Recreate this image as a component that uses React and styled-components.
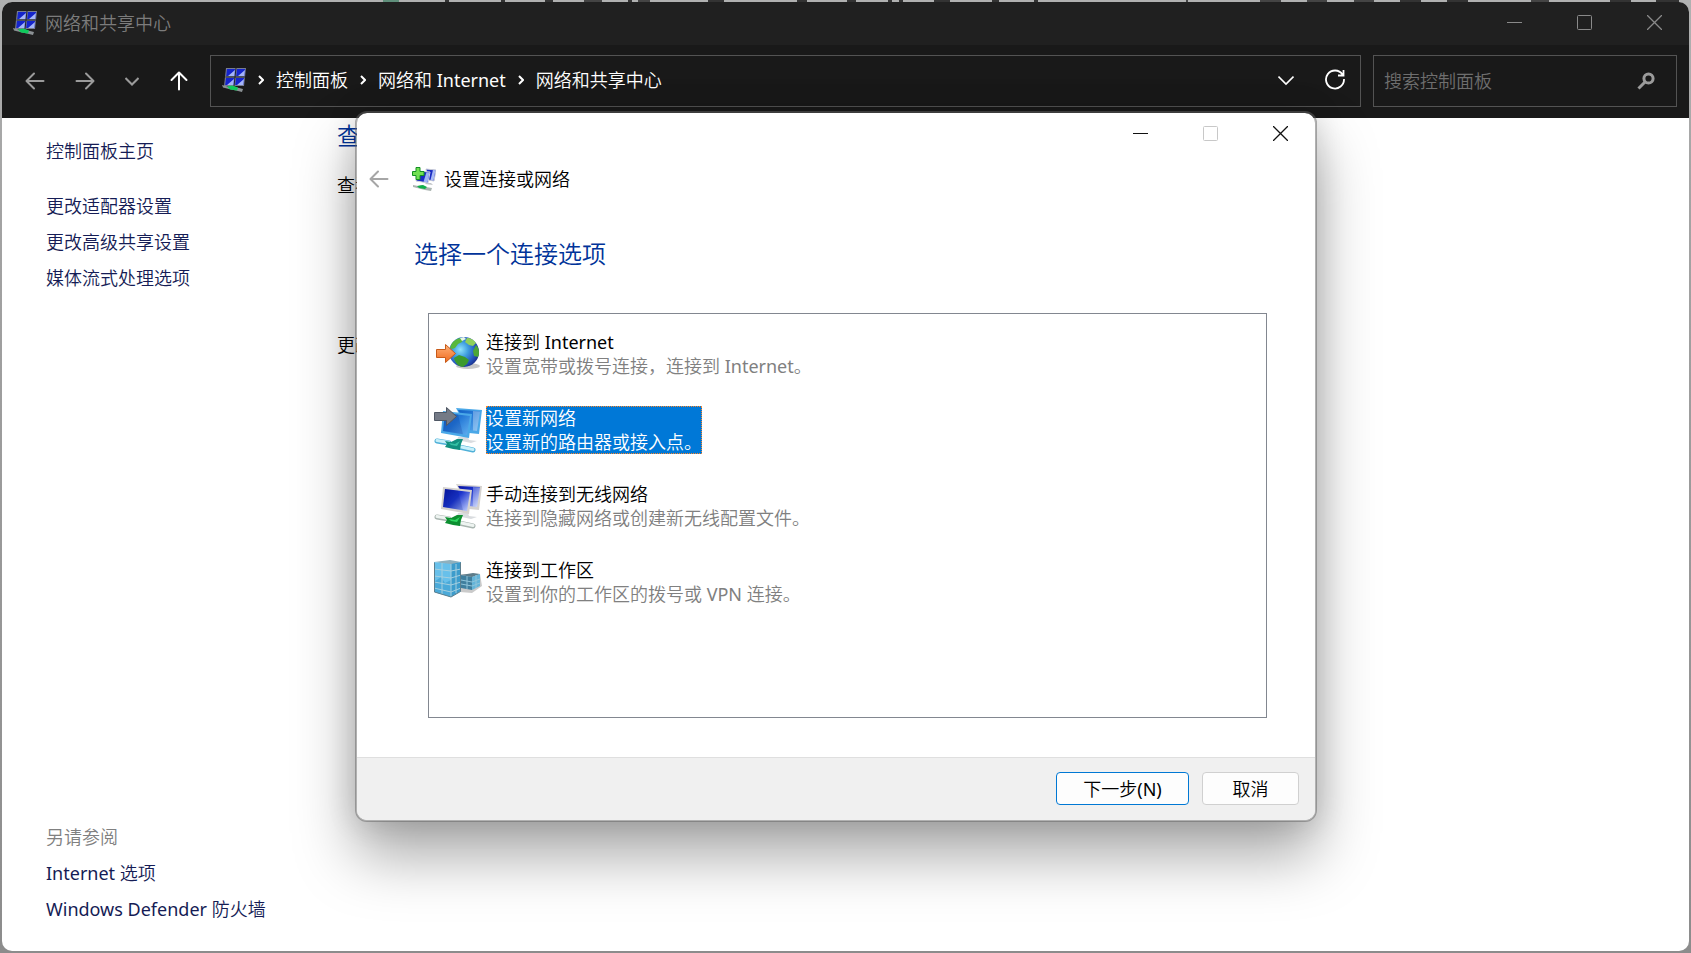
import { useState } from "react";
import styled, { createGlobalStyle, css } from "styled-components";

const OPTIONS = [
  {
    id: "internet",
    icon: "globe",
    title: "连接到 Internet",
    description: "设置宽带或拨号连接，连接到 Internet。",
  },
  {
    id: "router",
    icon: "router",
    title: "设置新网络",
    description: "设置新的路由器或接入点。",
  },
  {
    id: "wireless",
    icon: "wireless",
    title: "手动连接到无线网络",
    description: "连接到隐藏网络或创建新无线配置文件。",
  },
  {
    id: "workplace",
    icon: "workplace",
    title: "连接到工作区",
    description: "设置到你的工作区的拨号或 VPN 连接。",
  },
];

const CRUMBS = ["控制面板", "网络和 Internet", "网络和共享中心"];

// slivers of the window behind: [x, width, color]
const BACKDROP_MARKS = [
  [383, 16, "#5f8f7b"],
  [445, 4, "#333"],
  [501, 4, "#333"],
  [545, 8, "#333"],
  [584, 18, "#444"],
  [628, 4, "#333"],
  [638, 12, "#444"],
  [708, 16, "#333"],
  [797, 10, "#333"],
  [847, 9, "#333"],
  [888, 4, "#333"],
  [899, 4, "#333"],
  [934, 16, "#333"],
  [992, 7, "#333"],
  [1034, 4, "#333"],
  [1186, 2, "#444"],
  [1260, 21, "#444"],
  [1307, 20, "#444"],
  [1354, 20, "#444"],
  [1400, 21, "#333"],
  [1447, 21, "#333"],
  [1531, 18, "#444"],
  [1610, 21, "#333"],
  [1656, 23, "#333"],
];

const NetworkIcon = () => (
  <svg width="24" height="24" viewBox="0 0 24 24" aria-hidden="true">
    <path d="M4 0h20l-2 18H2z" fill="#777d92" />
    <path d="M13.500 0h1l-2 18h-1zM3.500 8.500h19.500v1H3.500z" fill="#20242c" />
    <path d="M5 1h8l-.8 7H4.200z" fill="#1424cc" />
    <path d="M15 1h8l-.8 7h-8z" fill="#1424cc" />
    <path d="M4 10h8l-.8 7H3.200z" fill="#1424cc" />
    <path d="M14 10h8l-.8 7h-8z" fill="#1424cc" />
    <path
      d="M13 2l-.8 6H6zM23 2l-.8 6H16zM12 11l-.8 6H5zM22 11l-.8 6H15z"
      fill="#a5b5f8"
    />
    <path d="M0 17l6 1.500 4-1 5 2 6 1.500-1 3-6-1.500-5-1-8-2z" fill="#8b9194" />
    <path d="M5 18.500l5-1 6 2-1 3-7-1z" fill="#0fca5c" />
  </svg>
);

const AddNetworkIcon = () => (
  <svg width="24" height="24" viewBox="0 0 24 24" aria-hidden="true">
    <path d="M14 2l10 1-2 11-6-1z" fill="#1a2cc4" stroke="#c9ccd6" />
    <path d="M21 3l2.500.3-2 10.200-3-.5z" fill="#a9baf6" />
    <path d="M5 4l13 1-2 11-12-2z" fill="#1a2cc4" stroke="#d4d7de" />
    <path d="M14.500 5.200l3 .3-2 10-4-.8z" fill="#9fb2f4" />
    <path d="M14 16h5l2 2-8-1z" fill="#c2c5c9" />
    <path d="M1 18l5 1 4-1 4 2 6 1-1 3-6-1-4-1-8-2z" fill="#aab4b0" />
    <path d="M5 19l6-1 4 2-2 2-6-1z" fill="#10b04a" />
    <path d="M4 .5h4v4h4v4H8v4H4v-4H.5v-4H4z" fill="#72e052" stroke="#139022" />
  </svg>
);

const GlobeIcon = () => (
  <svg width="48" height="48" viewBox="0 0 48 48" aria-hidden="true">
    <defs>
      <radialGradient id="sea" cx="0.38" cy="0.42" r="0.65">
        <stop offset="0" stopColor="#8fe3fb" />
        <stop offset="0.4" stopColor="#3f9ee0" />
        <stop offset="0.8" stopColor="#2450b8" />
        <stop offset="1" stopColor="#1a2f8a" />
      </radialGradient>
      <linearGradient id="orange" x1="0" y1="0" x2="0" y2="1">
        <stop offset="0" stopColor="#ffb27a" />
        <stop offset="1" stopColor="#f06a1c" />
      </linearGradient>
    </defs>
    <ellipse cx="34" cy="36" rx="12" ry="3" fill="#000" opacity="0.22" />
    <circle cx="30" cy="22" r="15" fill="url(#sea)" />
    <path d="M17 15c2-4 5-6 9-7l3 1-1 3-4 2-3 4-3 1-2-1z" fill="#58b83c" />
    <path d="M33 8c4 0 7 2 9 5l-3 3-4-1-4-3z" fill="#8fd05a" />
    <path d="M42 15c3 3 4 8 2 12l-4-1-1-5z" fill="#4ca636" />
    <path d="M20 28l5-3 6 2 4 3-2 4-4 3c-4 0-8-4-9-9z" fill="#3c9a2e" />
    <path d="M26 8l4-1 2 2-4 2z" fill="#e8f6e4" />
    <path
      d="M2.500 19.500h9v-5l10 9-10 9v-5h-9z"
      fill="url(#orange)"
      stroke="#c75a18"
      strokeLinejoin="round"
    />
  </svg>
);

const MonitorsIcon = ({ id, from, mid, to, frame, cable, plug, arrow }) => (
  <svg width="48" height="48" viewBox="0 0 48 48" aria-hidden="true">
    <defs>
      <linearGradient id={id} x1="0" y1="0" x2="1" y2="0.8">
        <stop offset="0" stopColor={from} />
        <stop offset="0.5" stopColor={mid} />
        <stop offset="1" stopColor={to} />
      </linearGradient>
    </defs>
    <path d="M22 2l26 2-3 24-10-1z" fill={frame} />
    <path d="M24 4l22 1-3 20-8-1z" fill={`url(#${id})`} />
    <path d="M39 5l7 .5-3 19.500-4-.5z" fill="#fff" opacity="0.3" />
    <path d="M24 31h10l1 3 8 1-6 2-14-3z" fill="#d9dcdf" />
    <path d="M9 5l29 3-3 24-28-5z" fill={frame} />
    <path d="M11 7l25 3-3 19-24-4z" fill={`url(#${id})`} />
    <path d="M11 7l13 1.500 5 19.800L9 25z" fill="#001a80" opacity="0.18" />
    <path
      d="M3 35l12 2M25 41l14 3"
      stroke={cable[0]}
      strokeWidth="5"
      strokeLinecap="round"
    />
    <path
      d="M3 34.500l12 2M25 40.500l14 3"
      stroke={cable[1]}
      strokeWidth="3"
      strokeLinecap="round"
    />
    <path d="M11 35l6 1 6-3h6l-2 5-1 6-7-1-8-2 2-3z" fill={plug[0]} />
    <path d="M15 37l6 1 5-3-3 5-6-1z" fill={plug[1]} />
    {arrow && (
      <path
        d="M.5 6.500h12v-5l10 9-10 9v-5H.5z"
        fill="#747a86"
        stroke="#4f5764"
        strokeLinejoin="round"
      />
    )}
  </svg>
);

const BuildingsIcon = () => (
  <svg width="48" height="48" viewBox="0 -2 48 48" aria-hidden="true">
    <path d="M26 32l12 1 10-7-2-12-19 0z" fill="#666" opacity="0.35" />
    <path d="M27 15l12-2 7 1-8 3z" fill="#5d7c8a" />
    <path d="M27 15l11 2v13l-11-2z" fill="#3f7f9e" />
    <path d="M38 17l8-3v12l-8 4z" fill="#64b4d8" />
    <path d="M27 20l11 2 8-3M27 24l11 2 8-3M33 16v13M42 15v13" stroke="#8fc4da" fill="none" />
    <path d="M0 2l16-2 11 2-10 3z" fill="#8fb0bd" />
    <path d="M0 2l17 2v33L0 32z" fill="#68c0ea" />
    <path d="M17 4l10-2v29l-10 6z" fill="#3d9ccc" />
    <path d="M0 22l7-5 4 6 6-3v17L0 32z" fill="#2e93c8" opacity="0.5" />
    <path
      d="M0 9l17 2 10-2M0 16l17 2 10-3M0 22l17 3 10-3M0 28l17 4 10-4M8 3v31M17 4v33M22 4v29"
      stroke="#a5cfdf"
      fill="none"
    />
    <path d="M.5 2.500v29.500l16.500 5 9.500-5.500V2.500" stroke="#5c7f8e" fill="none" />
  </svg>
);

const OptionIcon = ({ name }) => {
  if (name === "globe") return <GlobeIcon />;
  if (name === "workplace") return <BuildingsIcon />;
  if (name === "router") {
    return (
      <MonitorsIcon
        id="routerScreen"
        from="#1260c4"
        mid="#2478d6"
        to="#5aa8ec"
        frame="#4aa8e8"
        cable={["#4fb0d8", "#c9f0fa"]}
        plug={["#12907f", "#35c0a4"]}
        arrow
      />
    );
  }
  return (
    <MonitorsIcon
      id="wirelessScreen"
      from="#0712a0"
      mid="#1c34cc"
      to="#b0c0fa"
      frame="#d5d2cf"
      cable={["#a9b5b0", "#eef4f1"]}
      plug={["#0c8f30", "#2fd860"]}
    />
  );
};

const ArrowIcon = ({ dir = "left" }) => {
  const turn = { left: 0, up: 90, right: 180 }[dir];
  return (
    <svg width="20" height="20" viewBox="0 0 20 20" aria-hidden="true">
      <path
        d="M18.500 10H2M9 2.500L1.500 10 9 17.500"
        transform={`rotate(${turn} 10 10)`}
        fill="none"
        stroke="currentColor"
        strokeWidth="2"
        strokeLinecap="round"
        strokeLinejoin="round"
      />
    </svg>
  );
};

const ChevronIcon = ({ size = 16, stroke = 1.6 }) => (
  <svg width={size} height={size} viewBox="0 0 16 16" aria-hidden="true">
    <path d="M.5 4.500l7.500 7.500 7.500-7.500" fill="none" stroke="currentColor" strokeWidth={stroke} />
  </svg>
);

const CrumbChevron = () => (
  <svg width="6" height="10" viewBox="0 0 6 10" aria-hidden="true">
    <path d="M1 1l4 4-4 4" fill="none" stroke="#fff" strokeWidth="2" />
  </svg>
);

const RefreshIcon = () => (
  <svg width="22" height="22" viewBox="0 0 22 22" aria-hidden="true">
    <path
      d="M18.500 5.500A9 9 0 1 0 20 10M19.500 1v5.500H14"
      fill="none"
      stroke="currentColor"
      strokeWidth="1.800"
    />
  </svg>
);

const SearchIcon = () => (
  <svg width="18" height="18" viewBox="0 0 18 18" aria-hidden="true">
    <circle cx="11.500" cy="6.500" r="4.600" fill="none" stroke="#9b9b9b" strokeWidth="3" />
    <path d="M8 10L1.500 16.500" stroke="#9b9b9b" strokeWidth="3" />
  </svg>
);

const WindowButtons = ({ dark }) => (
  <Controls>
    <ControlButton $color={dark ? "#8a8a8a" : "#111"} aria-label="最小化">
      <svg width="15" height="15" viewBox="0 0 15 15">
        <path d="M0 7.500h15" stroke="currentColor" />
      </svg>
    </ControlButton>
    <ControlButton $color={dark ? "#8a8a8a" : "#c8c8c8"} aria-label="最大化">
      <svg width="15" height="15" viewBox="0 0 15 15">
        <rect x=".5" y=".5" width="14" height="14" rx="1" fill="none" stroke="currentColor" />
      </svg>
    </ControlButton>
    <ControlButton $color={dark ? "#8a8a8a" : "#111"} aria-label="关闭">
      <svg width="15" height="15" viewBox="0 0 15 15">
        <path d="M0 0l15 15M15 0L0 15" stroke="currentColor" strokeWidth="1.300" />
      </svg>
    </ControlButton>
  </Controls>
);

const App = () => {
  const [selected, setSelected] = useState("router");
  const [query, setQuery] = useState("");

  return (
    <Desktop>
      <GlobalStyle />
      <Backdrop width="100%" height="2" aria-hidden="true">
        {BACKDROP_MARKS.map(([x, width, color]) => (
          <rect key={x} x={x} width={width} height="2" fill={color} />
        ))}
      </Backdrop>

      <Window>
        <TitleBar>
          <NetworkIcon />
          <WindowTitle>网络和共享中心</WindowTitle>
          <WindowButtons dark />
        </TitleBar>

        <Toolbar>
          <NavButtons>
            <NavButton aria-label="后退">
              <ArrowIcon />
            </NavButton>
            <NavButton aria-label="前进">
              <ArrowIcon dir="right" />
            </NavButton>
            <NavButton aria-label="最近的位置">
              <ChevronIcon size={14} stroke={2.4} />
            </NavButton>
            <NavButton aria-label="上移" $active>
              <ArrowIcon dir="up" />
            </NavButton>
          </NavButtons>
          <AddressBar>
            <NetworkIcon />
            {CRUMBS.map(crumb => (
              <Crumb key={crumb}>
                <CrumbChevron />
                <CrumbLink href="#">{crumb}</CrumbLink>
              </Crumb>
            ))}
            <AddressActions>
              <IconButton aria-label="展开">
                <ChevronIcon />
              </IconButton>
              <IconButton aria-label="刷新">
                <RefreshIcon />
              </IconButton>
            </AddressActions>
          </AddressBar>
          <SearchBox>
            <SearchInput
              aria-label="搜索控制面板"
              placeholder="搜索控制面板"
              value={query}
              onChange={e => setQuery(e.target.value)}
            />
            <SearchIcon />
          </SearchBox>
        </Toolbar>

        <Body>
          <Sidebar>
            <SideLink href="#">控制面板主页</SideLink>
            <SideGroup>
              <SideLink href="#">更改适配器设置</SideLink>
              <SideLink href="#">更改高级共享设置</SideLink>
              <SideLink href="#">媒体流式处理选项</SideLink>
            </SideGroup>
            <SeeAlso>
              <SeeAlsoTitle>另请参阅</SeeAlsoTitle>
              <SideLink href="#">Internet 选项</SideLink>
              <SideLink href="#">Windows Defender 防火墙</SideLink>
            </SeeAlso>
          </Sidebar>
          <Content>
            <ContentTitle>查看</ContentTitle>
            <ContentText>查看</ContentText>
            <ContentText $last>更改</ContentText>
          </Content>
        </Body>
      </Window>

      <Dialog role="dialog" aria-labelledby="wizard-title">
        <WindowButtons />
        <WizardHeader>
          <BackButton aria-label="返回">
            <ArrowIcon />
          </BackButton>
          <AddNetworkIcon />
          <WizardTitle id="wizard-title">设置连接或网络</WizardTitle>
        </WizardHeader>
        <WizardBody>
          <Heading>选择一个连接选项</Heading>
          <OptionList>
            {OPTIONS.map(option => (
              <Option key={option.id} onClick={() => setSelected(option.id)}>
                <OptionIcon name={option.icon} />
                <OptionText $selected={option.id === selected}>
                  <OptionTitle>{option.title}</OptionTitle>
                  <OptionDescription>{option.description}</OptionDescription>
                </OptionText>
              </Option>
            ))}
          </OptionList>
        </WizardBody>
        <Footer>
          <ActionButton $primary>下一步(N)</ActionButton>
          <ActionButton>取消</ActionButton>
        </Footer>
      </Dialog>
    </Desktop>
  );
};

const GlobalStyle = createGlobalStyle`
  * {
    box-sizing: border-box;
  }

  body {
    margin: 0;
    font-family: "Noto Sans", "Noto Sans CJK SC DemiLight", "Noto Sans CJK SC", sans-serif;
    font-size: 18px;
    font-weight: 400;
    line-height: 24px;
    color: #000;
  }

  button,
  input {
    font: inherit;
  }

  button {
    padding: 0;
    border: none;
    background: none;
  }

  a {
    text-decoration: none;
  }

  svg {
    display: block;
    flex-shrink: 0;
  }
`;

const Desktop = styled.div`
  position: relative;
  height: 100vh;
  padding: 2px;
  overflow: hidden;
  background: linear-gradient(#b0b1b1, #a4a4a4 20%, #8c8c8c);
`;

const Backdrop = styled.svg`
  position: absolute;
  top: 0;
  left: 0;
`;

const Window = styled.div`
  position: relative;
  display: flex;
  flex-direction: column;
  height: 100%;
  overflow: hidden;
  background: #fff;
  border-radius: 10px;
`;

const TitleBar = styled.header`
  display: flex;
  align-items: center;
  gap: 8px;
  height: 43px;
  padding: 0 0 2px 11px;
  background: #202020;
`;

const WindowTitle = styled.span`
  flex: 1;
  color: #7c7c7c;
`;

const Controls = styled.div`
  display: flex;
  align-self: flex-start;
  justify-content: flex-end;
`;

const ControlButton = styled.button`
  display: flex;
  align-items: center;
  justify-content: center;
  width: 70px;
  height: 41px;
  color: ${p => p.$color};
`;

const Toolbar = styled.div`
  display: flex;
  gap: 12px;
  height: 73px;
  padding: 10px 12px 11px 23px;
  background: #191919;
`;

const NavButtons = styled.nav`
  display: flex;
  align-items: center;
  gap: 30px;
  width: 173px;
`;

const NavButton = styled.button`
  display: flex;
  align-items: center;
  height: 48px;
  color: ${p => (p.$active ? "#fff" : "#9b9b9b")};
`;

const AddressBar = styled.div`
  display: flex;
  flex: 1;
  align-items: center;
  gap: 12px;
  padding: 0 14px 2px 11px;
  border: 1px solid #535353;
`;

const Crumb = styled.span`
  display: flex;
  align-items: center;
  gap: 12px;
`;

const CrumbLink = styled.a`
  color: #fff;
`;

const AddressActions = styled.div`
  display: flex;
  gap: 30px;
  margin-left: auto;
`;

const IconButton = styled.button`
  display: flex;
  align-items: center;
  color: #fff;
`;

const SearchBox = styled.div`
  display: flex;
  align-items: center;
  width: 304px;
  padding: 0 21px 0 10px;
  border: 1px solid #535353;
`;

const SearchInput = styled.input`
  flex: 1;
  min-width: 0;
  padding: 0;
  color: #fff;
  background: none;
  border: none;
  outline: none;

  &::placeholder {
    color: #6e6e6e;
  }
`;

const Body = styled.div`
  display: flex;
  flex: 1;
`;

const Sidebar = styled.aside`
  display: flex;
  flex-direction: column;
  width: 335px;
  padding: 21px 0 30px 44px;
`;

const SideLink = styled.a`
  color: #151c55;
`;

const SideGroup = styled.nav`
  display: flex;
  flex-direction: column;
  gap: 12px;
  margin-top: 31px;
`;

const SeeAlso = styled.div`
  display: flex;
  flex-direction: column;
  gap: 12px;
  margin-top: auto;
`;

const SeeAlsoTitle = styled.span`
  color: #808080;
`;

const Content = styled.main`
  flex: 1;
`;

const ContentTitle = styled.h1`
  margin: 2px 0 0;
  font-size: 24px;
  font-weight: 400;
  line-height: 32px;
  color: #003399;
`;

const ContentText = styled.p`
  margin: ${p => (p.$last ? "136px" : "21px")} 0 0;
`;

const Dialog = styled.section`
  position: absolute;
  top: 111px;
  right: 374px;
  left: 355px;
  overflow: hidden;
  background: #fff;
  background-clip: padding-box;
  border: 2px solid rgba(100, 100, 100, 0.5);
  border-radius: 12px;
  box-shadow:
    0 34px 60px rgba(0, 0, 0, 0.34),
    0 0 30px rgba(0, 0, 0, 0.14);
`;

const WizardHeader = styled.div`
  display: flex;
  align-items: center;
  height: 50px;
  padding-left: 12px;
`;

const BackButton = styled.button`
  width: 43px;
  color: #a6a6a6;
`;

const WizardTitle = styled.span`
  margin-left: 8px;
`;

const WizardBody = styled.div`
  padding: 34px 48px 39px 57px;
`;

const Heading = styled.h2`
  margin: 0;
  font-size: 24px;
  font-weight: 400;
  line-height: 32px;
  color: #003399;
`;

const OptionList = styled.ul`
  display: flex;
  flex-direction: column;
  gap: 28px;
  height: 405px;
  margin: 43px 0 0 14px;
  padding: 16px 5px;
  list-style: none;
  border: 1px solid #828790;
`;

const Option = styled.li`
  display: flex;
  gap: 4px;
  cursor: default;
`;

const OptionTitle = styled.div`
  color: #000;
`;

const OptionDescription = styled.div`
  color: #808080;
`;

const OptionText = styled.div`
  ${p =>
    p.$selected &&
    css`
      background: #0078d7;
      outline: 1px dotted #ff8728;
      outline-offset: -1px;

      ${OptionTitle}, ${OptionDescription} {
        color: #fff;
      }
    `}
`;

const Footer = styled.footer`
  display: flex;
  justify-content: flex-end;
  gap: 13px;
  padding: 14px 16px 15px;
  background: #f0f0f0;
  border-top: 1px solid #dfdfdf;
`;

const ActionButton = styled.button`
  width: ${p => (p.$primary ? "133px" : "97px")};
  height: 33px;
  background: #fdfdfd;
  border: 1px solid ${p => (p.$primary ? "#0078d4" : "#d0d0d0")};
  border-radius: 4px;
`;

export default App;
